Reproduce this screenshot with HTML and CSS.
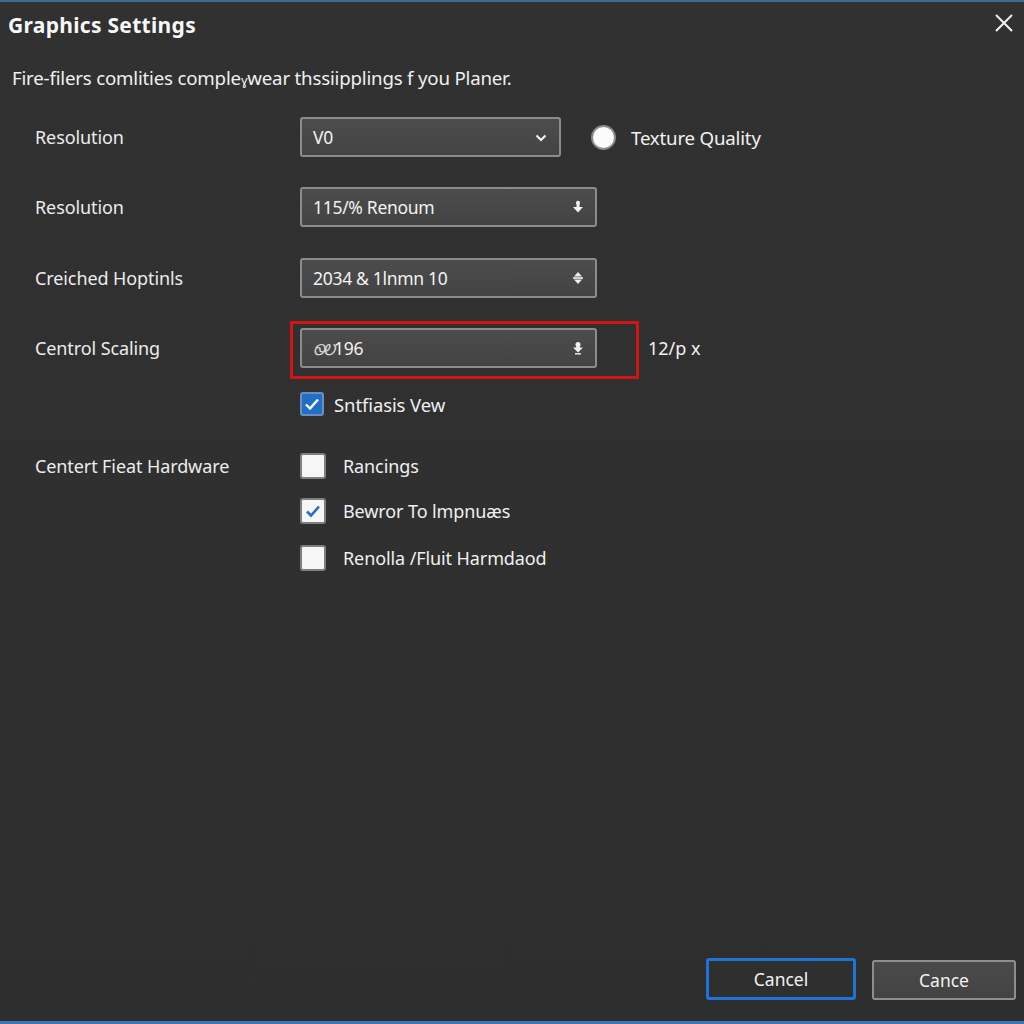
FILE: index.html
```html
<!DOCTYPE html>
<html>
<head>
<meta charset="utf-8">
<link rel="stylesheet" href="styles.css">
</head>
<body>
<div class="dialog">
  <header class="header">
    <h1 class="title">Graphics Settings</h1>
    <button class="close" aria-label="Close">
      <svg width="18" height="18" viewBox="0 0 18 18"><path d="M1 1L17 17M17 1L1 17" stroke="#f2f2f2" stroke-width="2" fill="none"/></svg>
    </button>
  </header>
  <p class="subtitle">Fire-filers comlities comple<span class="thin">ɣ</span>wear thssiipplings f you Planer.</p>

  <div class="form">
    <div class="row r1">
      <div class="label">Resolution</div>
      <div class="select short"><span>V0</span>
        <svg class="chev" width="12" height="8" viewBox="0 0 12 8"><path d="M1.5 1.5L6 6L10.5 1.5" stroke="#f0f0f0" stroke-width="2.2" fill="none"/></svg>
      </div>
      <div class="radio"></div>
      <span class="radio-text">Texture Quality</span>
    </div>
    <div class="row r2">
      <div class="label">Resolution</div>
      <div class="select"><span>115/% Renoum</span>
        <svg class="spin" width="12" height="14" viewBox="0 0 12 14"><circle cx="6" cy="2.8" r="2" fill="#f0f0f0"/><path d="M6 3V7" stroke="#f0f0f0" stroke-width="3"/><path d="M1 7H11L6 12.5Z" fill="#f0f0f0"/></svg>
      </div>
    </div>
    <div class="row r3">
      <div class="label">Creiched Hoptinls</div>
      <div class="select"><span>2034 &amp; 1lnmn 10</span>
        <svg class="spin" width="12" height="14" viewBox="0 0 12 14"><path d="M6 1L10 5.5H2Z" fill="#f0f0f0"/><path d="M1 7H11" stroke="#f0f0f0" stroke-width="1.6"/><path d="M2 8.5H10L6 13Z" fill="#f0f0f0"/></svg>
      </div>
    </div>
    <div class="row r4">
      <div class="label">Centrol Scaling</div>
      <div class="highlight">
        <div class="select"><span><i class="ital">ᏫᎧ</i>196</span>
          <svg class="spin" width="12" height="14" viewBox="0 0 12 14"><circle cx="6" cy="3.5" r="2.5" fill="#f0f0f0"/><path d="M6 3V7" stroke="#f0f0f0" stroke-width="3.5"/><path d="M1 6.5H11L6 11.5Z" fill="#f0f0f0"/><path d="M3 12.8H9" stroke="#f0f0f0" stroke-width="1.4"/></svg>
        </div>
      </div>
      <span class="unit">12/p x</span>
    </div>
    <div class="row r5">
      <div class="label"></div>
      <div class="check blue"><svg width="16" height="14" viewBox="0 0 16 14"><path d="M2 7.5L6 11.5L14 2.5" stroke="#fff" stroke-width="2.4" fill="none"/></svg></div>
      <span class="check-text small">Sntfiasis Vew</span>
    </div>
    <div class="row r6">
      <div class="label">Centert Fieat Hardware</div>
      <div class="check"></div>
      <span class="check-text">Rancings</span>
    </div>
    <div class="row r7">
      <div class="label"></div>
      <div class="check"><svg width="16" height="14" viewBox="0 0 16 14"><path d="M2 7.5L6 11.5L14 2.5" stroke="#2a6fc0" stroke-width="2.6" fill="none"/></svg></div>
      <span class="check-text">Bewror To lmpnuæs</span>
    </div>
    <div class="row r8">
      <div class="label"></div>
      <div class="check"></div>
      <span class="check-text">Renolla /Fluit Harmdaod</span>
    </div>
  </div>

  <footer class="footer">
    <button class="btn primary">Cancel</button>
    <button class="btn secondary">Cance</button>
  </footer>
</div>
</body>
</html>
```

FILE: styles.css
```css
html, body {
  margin: 0;
  padding: 0;
  background: #2f2f2f;
}
body {
  font-family: "Noto Sans", "Open Sans", sans-serif;
  color: #f0f0f0;
}
.dialog {
  width: 1024px;
  height: 1024px;
  box-sizing: border-box;
  border-top: 2px solid #3d6a99;
  border-bottom: 3px solid #3b78b8;
  background: linear-gradient(180deg, #313131 0%, #2e2e2e 100%);
  display: flex;
  flex-direction: column;
}
.header {
  display: flex;
  justify-content: space-between;
  align-items: center;
  height: 46px;
  padding: 0 11px 0 8px;
}
.title {
  margin: 0;
  font-size: 21px;
  font-weight: 700;
  letter-spacing: 0.3px;
  color: #f7f7f7;
}
.close {
  background: none;
  border: none;
  padding: 0;
  margin-top: -4px;
  width: 18px;
  height: 18px;
  display: flex;
}
.subtitle {
  margin: 13px 0 0 12px;
  font-size: 18.7px;
  line-height: 34px;
  height: 38px;
  color: #f0f0f0;
  letter-spacing: -0.2px;
}
.thin { font-size: 13px; }
.form {
  flex: 1;
  display: flex;
  flex-direction: column;
  padding-left: 35px;
  padding-top: 3px;
}
.row {
  display: flex;
  align-items: center;
}
.r1 { height: 70px; }
.r2 { height: 70px; }
.r3 { height: 71px; }
.r4 { height: 70px; }
.r5 { height: 42px; }
.r6 { height: 50px; margin-top: 16px; }
.r7 { height: 40px; }
.r8 { height: 54px; }
.label {
  width: 265px;
  flex: none;
  font-size: 18px;
  color: #ececec;
  letter-spacing: -0.1px;
}
.select {
  box-sizing: border-box;
  width: 297px;
  height: 40px;
  border: 2px solid #8c8c8c;
  border-radius: 3px;
  background: linear-gradient(180deg, #4c4c4c 0%, #434343 100%);
  display: flex;
  align-items: center;
  justify-content: space-between;
  padding: 0 11px 0 11px;
  font-size: 17.5px;
  color: #f2f2f2;
  letter-spacing: -0.3px;
}
.select.short { width: 261px; padding-right: 12px; }
.chev { margin-top: 1px; }
.ital { font-style: italic; font-size: 15px; opacity: 0.85; letter-spacing: -2px; margin-right: 1px; }
.radio {
  box-sizing: border-box;
  margin-left: 30px;
  width: 25px;
  height: 25px;
  border-radius: 50%;
  background: #fbfbfb;
  border: 2px solid #8a8a8a;
  flex: none;
}
.radio-text {
  margin-left: 15px;
  font-size: 18.7px;
  letter-spacing: -0.2px;
  color: #f0f0f0;
}
.highlight {
  margin-left: -10px;
  margin-top: 4px;
  padding: 4px 39px 8px 7px;
  border: 3px solid #d21414;
  display: flex;
}
.unit {
  margin-left: 9px;
  font-size: 18px;
  color: #f0f0f0;
}
.check {
  box-sizing: border-box;
  width: 26px;
  height: 26px;
  border: 2px solid #7f7f7f;
  border-radius: 3px;
  background: #f6f6f6;
  display: flex;
  align-items: center;
  justify-content: center;
  flex: none;
}
.check.blue {
  width: 24px;
  height: 24px;
  background: #1f6fc9;
  border-color: #6b8fb8;
}
.check-text {
  margin-left: 17px;
  font-size: 18px;
  color: #efefef;
  letter-spacing: -0.1px;
}
.check-text.small { margin-left: 10px; font-size: 18.5px; }
.footer {
  display: flex;
  justify-content: flex-end;
  align-items: flex-end;
  gap: 16px;
  padding: 0 8px 21px 0;
}
.btn {
  font-family: "Noto Sans", "Open Sans", sans-serif;
  font-size: 17.5px;
  color: #f2f2f2;
  border-radius: 3px;
  box-sizing: border-box;
}
.primary {
  width: 150px;
  height: 42px;
  background: #2f2f2f;
  border: 3px solid #1e74d6;
}
.secondary {
  width: 144px;
  height: 40px;
  background: linear-gradient(180deg, #4a4a4a 0%, #434343 100%);
  border: 2px solid #8e8e8e;
}
```
